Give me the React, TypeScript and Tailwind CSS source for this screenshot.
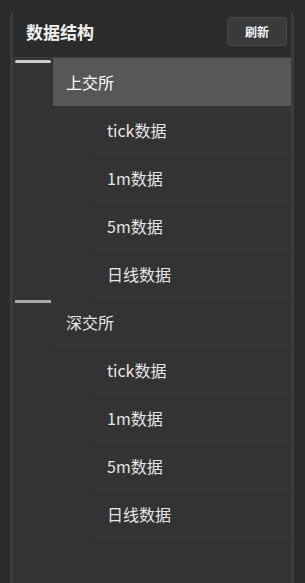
import React from 'react';

interface TreeNode {
  label: string;
  selected?: boolean;
  children: string[];
}

const tree: TreeNode[] = [
  { label: '上交所', selected: true, children: ['tick数据', '1m数据', '5m数据', '日线数据'] },
  { label: '深交所', children: ['tick数据', '1m数据', '5m数据', '日线数据'] },
];

const font = { fontFamily: '"Noto Sans CJK SC", "Noto Sans", sans-serif' };

export default function App() {
  return (
    <div className="w-[305px] h-[583px] bg-[#2b2b2b] pt-[12px] pl-[10px] overflow-hidden" style={font}>
      <div className="w-[284px] h-full border-x-[3px] border-[#3c3c3c] flex flex-col">
        {/* Header */}
        <div className="flex items-start justify-between pl-[13px] pr-[4px] pt-[5px] h-[46px] border-b border-[#3e3e3e]">
          <span className="text-[17px] font-bold text-[#f0f0f0] leading-[29px]">数据结构</span>
          <button className="w-[60px] h-[29px] rounded-[4px] bg-[#3a3a3a] border border-[#484848] text-[12px] font-bold text-[#f2f2f2]">
            刷新
          </button>
        </div>

        {/* Tree */}
        <div className="flex-1 bg-[#333333]">
          {tree.map((node) => (
            <div key={node.label} className="flex">
              <div className="w-[40px] shrink-0 pl-[2px] pt-[2px]">
                {node.selected ? (
                  <div className="w-[36px] h-[3px] rounded-full bg-[#cccccc]" />
                ) : (
                  <div className="w-[36px] h-[3px] bg-[#a9a9a9]" />
                )}
              </div>
              <div className="flex-1">
                <div
                  className={`h-[48px] flex items-center pl-[13px] text-[16px] border-b ${
                    node.selected ? 'bg-[#575757] border-[#575757] text-white' : 'border-[#3c3c3c] text-[#e6e6e6]'
                  }`}
                >
                  {node.label}
                </div>
                <div className="ml-[40px]">
                  {node.children.map((child) => (
                    <div
                      key={child}
                      className="h-[48px] flex items-center pl-[14px] text-[16px] text-[#e6e6e6] border-b border-[#3c3c3c]"
                    >
                      {child}
                    </div>
                  ))}
                </div>
              </div>
            </div>
          ))}
        </div>
      </div>
    </div>
  );
}
